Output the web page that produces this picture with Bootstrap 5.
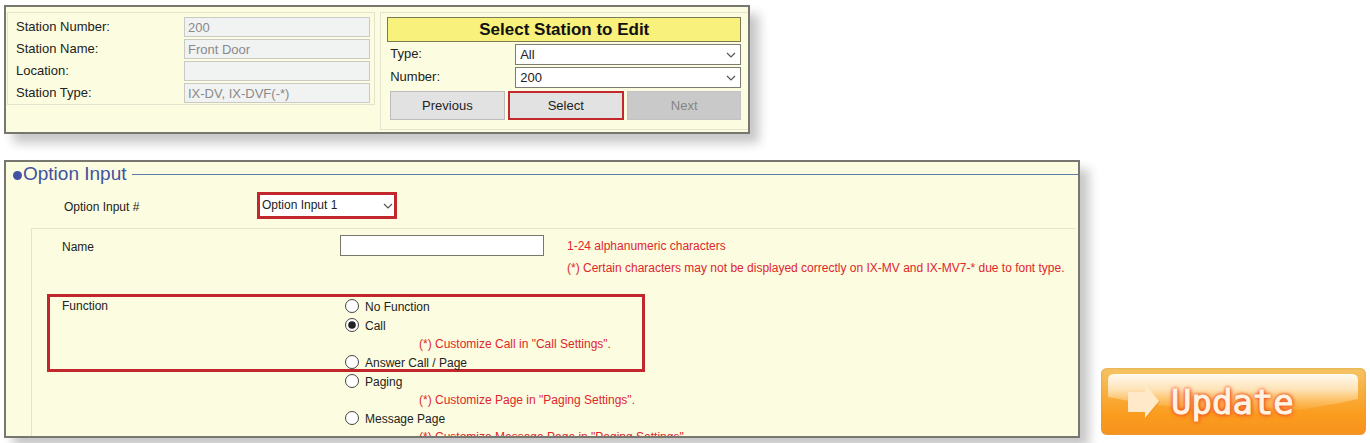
<!DOCTYPE html>
<html lang="en">
<head>
<meta charset="utf-8">
<meta name="viewport" content="width=device-width, initial-scale=1">
<title>Option Input</title>
<link href="https://cdn.jsdelivr.net/npm/bootstrap@5.3.0/dist/css/bootstrap.min.css" rel="stylesheet">
<style>
  body { font-family: "Liberation Sans", Arial, sans-serif; font-size: 13px; line-height: 18px; color: #222; background: #fff; }
  .page { height: 100vh; padding: 5px 4px; gap: 26px; }
  .panel { background: #fcfce0; border: 2px solid #77776f; box-shadow: 9px 9px 10px rgba(0, 0, 0, .22); }
  .station { width: 54.8%; min-width: 600px; padding: 5px 0 2px 1px; gap: 5px; }
  .group { border: 1px solid #e3e3cf; }
  .half { flex: 1 1 0; min-width: 0; }
  .info { padding: 4px 4px 1px 8px; row-gap: 2px; display: grid; grid-template-columns: 168px 1fr; }
  .info label { padding-top: 1px; }
  .info .form-control { height: 20px; padding: 0 3px; font-size: 13px; line-height: 18px; color: #8a8a8a; background: #f1f2f2; border: 1px solid #c9cac6; border-radius: 0; }
  .picker { padding: 4px 7px 9px 6px; border-right: 0; }
  .picker h1 { font-size: 17px; line-height: 23px; color: #111; background: #f8f17b; border: 1px solid #7c7a55; }
  .picker-row { display: grid; grid-template-columns: 125px 1fr; margin-top: 2px; padding-left: 3px; }
  .picker-row label { padding-top: 1px; }
  .form-select { height: 21px; padding: 0 20px 0 4px; font-size: 13px; line-height: 19px; color: #222; border: 1px solid #7c7c74; border-radius: 0;
    background: #fff url("data:image/svg+xml,%3Csvg xmlns='http://www.w3.org/2000/svg' viewBox='0 0 10 6'%3E%3Cpath d='M1 1l4 4 4-4' fill='none' stroke='%23555' stroke-width='1.2'/%3E%3C/svg%3E") no-repeat right 4px center / 10px 6px; }
  .tools { gap: 3px; padding: 3px 0 0 3px; }
  .btn-tool { height: 29px; padding: 0; font-size: 13px; line-height: 18px; color: #222; background: #e2e2e2; border: 1px solid #bcbcbc; border-radius: 0; flex: 1 1 0; }
  .btn-tool:disabled { color: #858585; background: #c9c9c9; border-color: #c2c2c2; opacity: 1; }
  .btn-pick { border: 2px solid #c4282f; }
  .options { font-size: 12px; }
  .options h2 { font-size: 19px; line-height: 24px; color: #4152a2; gap: 5px; padding-left: 7px; }
  .options h2::after { content: ""; flex: 1; height: 1px; background: #5b7ba8; }
  .dot { width: 9px; height: 9px; border-radius: 50%; background: #4152a2; margin: 3px 1px 0 0; }
  .input-row { padding: 6px 0 9px 58px; }
  .input-row label { width: 193px; padding-top: 2px; }
  .input-row .form-select { width: 140px; height: 27px; padding-left: 2px; font-size: 12px; border: 3px solid #c1272d; background-position: right 1px center; }
  .sheet { margin: 0 2px 0 25px; border-right: 0; border-bottom: 0; }
  .name-row { padding: 6px 0 0 30px; min-height: 65px; }
  .name-row label { width: 278px; padding-top: 3px; }
  .name-row .form-control { width: 204px; height: 21px; padding: 0 3px; font-size: 12px; border: 1px solid #77776c; border-radius: 0; }
  .hint { color: #e0262b; }
  .name-row .hint { padding-left: 23px; line-height: 22px; }
  .function-box { max-width: 598px; margin-left: 15px; padding-left: 12px; border: 3px solid #c1272d; }
  .function-rest { padding-left: 30px; }
  .field-name { width: 283px; }
  .function-box .choices { margin-bottom: -3px; }
  .form-check { min-height: 19px; margin: 0; padding: 0; display: flex; align-items: center; gap: 6px; }
  .form-check .form-check-input { width: 14px; height: 14px; margin: 0 0 2px; float: none; border: 1px solid #444; background-color: #fff; }
  .form-check .form-check-input:checked { background-color: #fff;
    background-image: url("data:image/svg+xml,%3Csvg xmlns='http://www.w3.org/2000/svg' viewBox='0 0 12 12'%3E%3Ccircle cx='6' cy='6' r='3.8' fill='%23222'/%3E%3C/svg%3E"); }
  .choices .hint { padding-left: 74px; line-height: 18px; }
  .update { width: 265px; height: 67px; margin: 0 0 3px 21px; padding: 0 0 0 27px; border: 0; gap: 10px; overflow: hidden; border-radius: 6px; background: linear-gradient(#f5c566, #f9ac3a 40%, #fb9c1e 70%, #f6921e); box-shadow: inset 0 0 3px #d9a04a; }
  .gloss { position: absolute; inset: 0; width: 100%; height: 100%; }
  .update-text { font-family: "DejaVu Sans Mono", monospace; font-size: 34px; line-height: 60px; color: #fff4e4; text-shadow: 0 0 3px #f0541e, 0 0 3px #f0541e, 0 0 5px #f0602a, 1px 1px 5px #f0602a; -webkit-text-stroke: 1px #fff4e4; }
</style>
</head>
<body>
<div class="page d-flex flex-column">
  <section class="panel station d-flex align-items-start flex-shrink-0">
    <div class="group info half">
      <label for="st-number">Station Number:</label><input id="st-number" class="form-control" value="200" disabled>
      <label for="st-name">Station Name:</label><input id="st-name" class="form-control" value="Front Door" disabled>
      <label for="st-location">Location:</label><input id="st-location" class="form-control" disabled>
      <label for="st-type">Station Type:</label><input id="st-type" class="form-control" value="IX-DV, IX-DVF(-*)" disabled>
    </div>
    <form class="group picker half">
      <h1 class="fw-bold text-center m-0">Select Station to Edit</h1>
      <div class="picker-row"><label for="type">Type:</label><select id="type" class="form-select"><option>All</option></select></div>
      <div class="picker-row"><label for="number">Number:</label><select id="number" class="form-select"><option>200</option></select></div>
      <div class="tools d-flex">
        <button type="button" class="btn btn-tool">Previous</button>
        <button type="button" class="btn btn-tool btn-pick">Select</button>
        <button type="button" class="btn btn-tool" disabled>Next</button>
      </div>
    </form>
  </section>

  <div class="d-flex align-items-end flex-fill" style="min-height:0">
    <section class="panel options half align-self-stretch overflow-hidden">
      <h2 class="d-flex align-items-center fw-normal mb-0"><span class="d-flex align-items-center"><span class="dot"></span>Option Input</span></h2>
      <div class="input-row d-flex align-items-center">
        <label for="option-input">Option Input #</label>
        <select id="option-input" class="form-select"><option>Option Input 1</option></select>
      </div>
      <div class="group sheet">
        <div class="name-row d-flex align-items-start">
          <label for="opt-name" class="flex-shrink-0">Name</label>
          <input id="opt-name" class="form-control flex-shrink-0">
          <div class="hint text-nowrap">1-24 alphanumeric characters<br>(*) Certain characters may not be displayed correctly on IX-MV and IX-MV7-* due to font type.</div>
        </div>
        <div class="function-box d-flex">
          <div class="field-name">Function</div>
          <div class="choices">
            <div class="form-check"><input class="form-check-input" type="radio" name="fn" id="fn-none"><label for="fn-none">No Function</label></div>
            <div class="form-check"><input class="form-check-input" type="radio" name="fn" id="fn-call" checked><label for="fn-call">Call</label></div>
            <div class="hint">(*) Customize Call in "Call Settings".</div>
            <div class="form-check"><input class="form-check-input" type="radio" name="fn" id="fn-answer"><label for="fn-answer">Answer Call / Page</label></div>
          </div>
        </div>
        <div class="function-rest d-flex">
          <div class="field-name"></div>
          <div class="choices">
            <div class="form-check"><input class="form-check-input" type="radio" name="fn" id="fn-paging"><label for="fn-paging">Paging</label></div>
            <div class="hint">(*) Customize Page in "Paging Settings".</div>
            <div class="form-check"><input class="form-check-input" type="radio" name="fn" id="fn-message"><label for="fn-message">Message Page</label></div>
            <div class="hint">(*) Customize Message Page in "Paging Settings".</div>
          </div>
        </div>
      </div>
    </section>
    <button type="submit" class="update position-relative d-flex align-items-center flex-shrink-0">
      <svg class="gloss" viewBox="0 0 265 67" preserveAspectRatio="none" aria-hidden="true">
        <defs><linearGradient id="shine" x1="0" y1="0" x2="0" y2="1"><stop offset="0" stop-color="#fffaf0"/><stop offset=".4" stop-color="#ffeccb" stop-opacity=".85"/><stop offset="1" stop-color="#ffc566" stop-opacity=".1"/></linearGradient></defs>
        <path d="M7 12q0-6 6-6h238q6 0 6 6v19q-60 14-110 14Q60 40 7 29z" fill="url(#shine)"/>
      </svg>
      <svg class="position-relative flex-shrink-0" width="33" height="36" viewBox="0 0 33 36" aria-hidden="true">
        <path d="M2 10h16V2l14 16-14 17v-8H2z" fill="#e88a24" opacity=".4"/>
        <path d="M0 8h17V0l14 17-14 17v-6H0z" fill="#ffe9c8"/>
      </svg>
      <span class="update-text position-relative">Update</span>
    </button>
  </div>
</div>
<script src="https://cdn.jsdelivr.net/npm/bootstrap@5.3.0/dist/js/bootstrap.bundle.min.js"></script>
</body>
</html>
